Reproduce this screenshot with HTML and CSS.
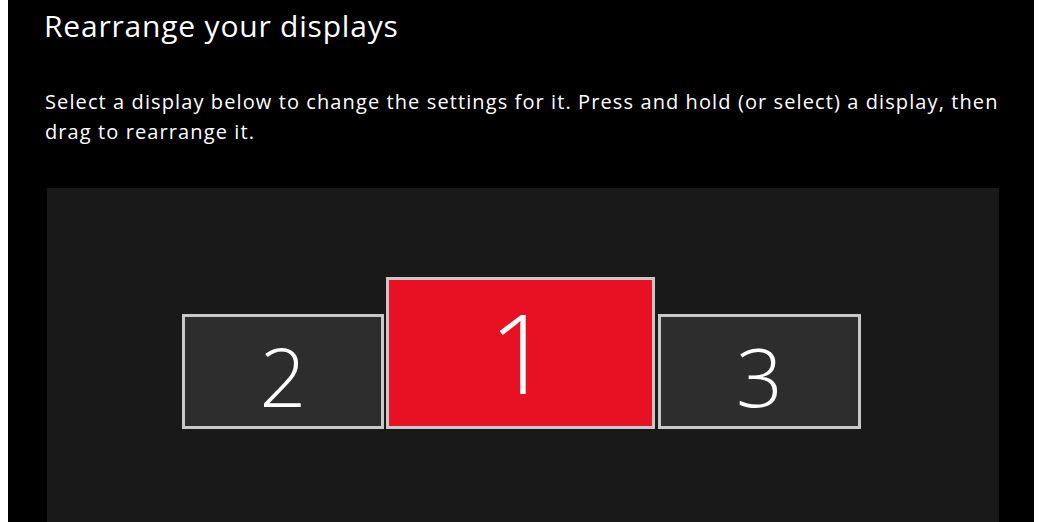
FILE: index.html
```html
<!DOCTYPE html>
<html>
<head>
<meta charset="utf-8">
<link rel="stylesheet" href="styles.css">
</head>
<body>
<div class="page">
  <h1 class="title">Rearrange your displays</h1>
  <p class="desc">Select a display below to change the settings for it. Press and hold (or select) a display, then drag to rearrange it.</p>
  <div class="panel">
    <div class="display small"><span class="num">2</span></div>
    <div class="display main"><span class="num big">1</span></div>
    <div class="display small wide"><span class="num">3</span></div>
  </div>
</div>
</body>
</html>
```
FILE: styles.css
```css
html, body {
  margin: 0;
  padding: 0;
  background: #ffffff;
  height: 100%;
}
body {
  padding: 0 10px 0 8px;
  box-sizing: border-box;
  overflow: hidden;
}
.page {
  background: #000000;
  height: 100%;
  padding: 0 35px 0 36px;
  box-sizing: border-box;
  font-family: "Open Sans", "Noto Sans", sans-serif;
  color: #ffffff;
}
.title {
  margin: 0;
  padding-top: 6px;
  font-size: 30px;
  font-weight: 400;
  line-height: 40px;
  letter-spacing: 0.8px;
}
.desc {
  margin: 41px -14px 0 1px;
  font-size: 20px;
  line-height: 30px;
  letter-spacing: 1.1px;
}
.panel {
  margin: 41px 0 0 3px;
  background: #191919;
  height: 334px;
  display: flex;
  justify-content: center;
  align-items: flex-start;
  padding: 89px 3px 0 0;
  box-sizing: border-box;
  gap: 2px;
}
.display {
  border: 3px solid #c8c8c8;
  box-sizing: border-box;
  display: flex;
  align-items: center;
  justify-content: center;
}
.small {
  width: 202px;
  height: 115px;
  margin-top: 37px;
  padding-top: 6px;
  background: #2d2d2d;
}
.wide {
  width: 203px;
  margin-left: 1px;
}
.main {
  width: 269px;
  height: 152px;
  background: #e81123;
}
.num {
  font-size: 82px;
  font-weight: 300;
  line-height: 1;
}
.big {
  font-size: 110px;
  margin-top: -4px;
}
```
